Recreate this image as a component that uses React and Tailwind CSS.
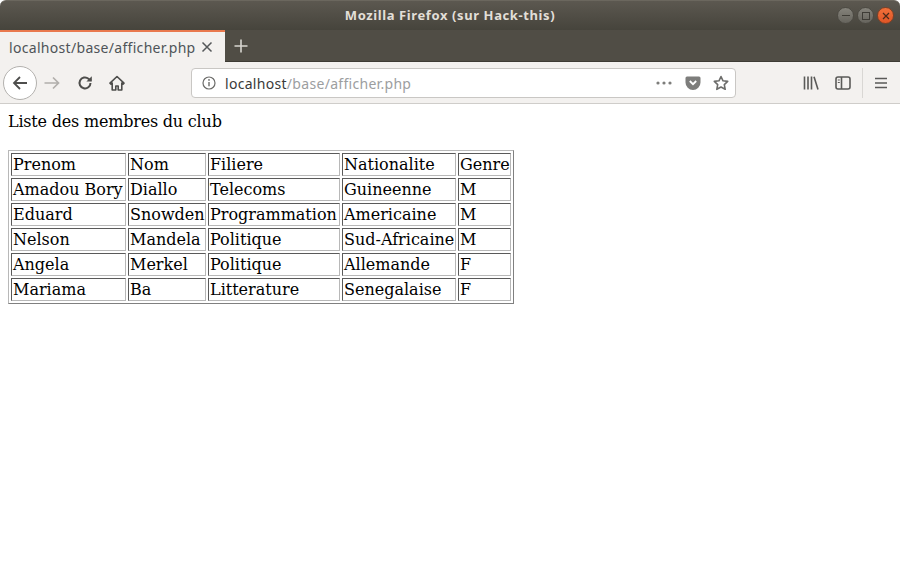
const rows = [
  ["Prenom", "Nom", "Filiere", "Nationalite", "Genre"],
  ["Amadou Bory", "Diallo", "Telecoms", "Guineenne", "M"],
  ["Eduard", "Snowden", "Programmation", "Americaine", "M"],
  ["Nelson", "Mandela", "Politique", "Sud-Africaine", "M"],
  ["Angela", "Merkel", "Politique", "Allemande", "F"],
  ["Mariama", "Ba", "Litterature", "Senegalaise", "F"],
];

const colW = ["w-[115px]", "w-[78px]", "w-[132px]", "w-[114px]", "w-[53px]"];

const ui = { fontFamily: '"Noto Sans", "Open Sans", sans-serif' };

function Icon({ children, w = 18, h = 18, vb = "0 0 18 18", cls = "" }) {
  return (
    <svg width={w} height={h} viewBox={vb} fill="none" className={cls}>
      {children}
    </svg>
  );
}

export default function App() {
  return (
    <div className="w-[900px] h-[575px] bg-white overflow-hidden flex flex-col">
      {/* title bar */}
      <div className="h-[30px] relative flex items-center justify-center bg-gradient-to-b from-[#5c5850] to-[#46443c] rounded-t-[6px] border-t border-[#6b675e]">
        <span className="text-[13px] font-bold text-[#e2dfd8] tracking-[0.6px]" style={ui}>Mozilla Firefox (sur Hack-this)</span>
        <div className="absolute right-[6px] top-[6px] flex gap-[3px]">
          <div className="w-[17px] h-[17px] rounded-full bg-gradient-to-b from-[#85837b] to-[#66645d] border border-[#4c4a43] flex items-center justify-center">
            <div className="w-[8px] h-px bg-[#3e3c36]" />
          </div>
          <div className="w-[17px] h-[17px] rounded-full bg-gradient-to-b from-[#85837b] to-[#66645d] border border-[#4c4a43] flex items-center justify-center">
            <div className="w-[8px] h-[8px] border border-[#3e3c36]" />
          </div>
          <div className="w-[17px] h-[17px] rounded-full bg-gradient-to-b from-[#f0703a] to-[#df5526] border border-[#7f4025] flex items-center justify-center">
            <Icon w={8} h={8} vb="0 0 8 8"><path d="M1 1l6 6M7 1L1 7" stroke="#4a2a1a" strokeWidth="1.2" /></Icon>
          </div>
        </div>
      </div>
      {/* tab strip */}
      <div className="h-[32px] flex bg-[#504d45] border-b border-[#3d3b34]">
        <div className="w-[225px] h-[32px] bg-[#f3f1ef] border-t-2 border-[#e9794e] flex items-center pl-[9px] shrink-0">
          <span className="text-[14px] tracking-[0.31px] text-[#4e5458] whitespace-nowrap w-[192px]" style={ui}>localhost/base/afficher.php</span>
          <Icon w={12} h={12} vb="0 0 12 12"><path d="M1.5 1.5l9 9M10.5 1.5l-9 9" stroke="#55585a" strokeWidth="1.5" /></Icon>
        </div>
        <div className="flex items-center pl-[8px]">
          <Icon w={16} h={16} vb="0 0 16 16"><path d="M8 1.5v13M1.5 8h13" stroke="#d8d6d0" strokeWidth="1.6" /></Icon>
        </div>
      </div>
      {/* nav bar */}
      <div className="h-[42px] flex items-center bg-[#f3f1ef] border-b border-[#cfcdca] relative">
        <div className="ml-[3px] w-[34px] h-[34px] rounded-full bg-white border border-[#b3b1ae] flex items-center justify-center">
          <Icon><path d="M16 9H3M9 3L3 9l6 6" stroke="#4e4e4c" strokeWidth="1.8" /></Icon>
        </div>
        <div className="ml-[6px] flex items-center">
          <Icon><path d="M1.5 9h14M10 3.5L15.5 9 10 14.5" stroke="#b1afac" strokeWidth="1.7" /></Icon>
        </div>
        <div className="ml-[16px] flex items-center">
          <Icon w={16} h={16} vb="0 0 16 16"><path d="M13.5 8A5.5 5.5 0 1 1 11.5 3.7L14 5.5" stroke="#4e4e4c" strokeWidth="2" /><path d="M14.8 1.2v5.4H9.4z" fill="#4e4e4c" /></Icon>
        </div>
        <div className="ml-[16px] flex items-center">
          <Icon w={16} h={16} vb="0 0 16 16"><path d="M8 1.5L1 8.2l1 1 1.2-1.1V15h3.6v-4h2.4v4h3.6V8.1L14 9.2l1-1z" fill="none" stroke="#4e4e4c" strokeWidth="1.6" strokeLinejoin="round" /></Icon>
        </div>
        <div className="ml-[66px] w-[545px] h-[30px] bg-white rounded-[4px] border border-[#c9c7c4] flex items-center shrink-0">
          <Icon w={14} h={14} vb="0 0 14 14" cls="ml-[10px]"><circle cx="7" cy="7" r="6" stroke="#6b6b69" strokeWidth="1.2" /><path d="M7 6v4.2" stroke="#6b6b69" strokeWidth="1.4" /><circle cx="7" cy="3.9" r="0.9" fill="#6b6b69" /></Icon>
          <span className="ml-[9px] mt-[2px] text-[14px] tracking-[0.3px] text-[#9c9e9f] whitespace-nowrap" style={ui}><span className="text-[#3a3a38]">localhost</span>/base/afficher.php</span>
          <div className="ml-auto flex items-center">
            <Icon w={16} h={4} vb="0 0 16 4"><circle cx="2" cy="2" r="1.6" fill="#7d7d7b" /><circle cx="8" cy="2" r="1.6" fill="#7d7d7b" /><circle cx="14" cy="2" r="1.6" fill="#7d7d7b" /></Icon>
            <Icon w={16} h={16} vb="0 0 16 16" cls="ml-[13px]"><path d="M2 1.5h12a1.5 1.5 0 0 1 1.5 1.5v4.5a7.5 7.5 0 0 1-15 0V3A1.5 1.5 0 0 1 2 1.5z" fill="#7d7d7b" /><path d="M4.8 6L8 9.2 11.2 6" stroke="#fff" strokeWidth="1.8" /></Icon>
            <Icon w={16} h={16} vb="0 0 16 16" cls="ml-[12px] mr-[6px]"><path d="M8 1.5l2 4.3 4.7.6-3.4 3.2.9 4.7L8 12l-4.2 2.3.9-4.7L1.3 6.4 6 5.8z" stroke="#6d6d6b" strokeWidth="1.6" strokeLinejoin="round" /></Icon>
          </div>
        </div>
        <div className="ml-[67px] flex items-center">
          <Icon w={16} h={16} vb="0 0 16 16"><path d="M1.5 1.5v13M5 1.5v13M8.5 1.5v13" stroke="#5a5a58" strokeWidth="1.6" /><path d="M11 1.8l4 12.8" stroke="#5a5a58" strokeWidth="1.6" /></Icon>
          <Icon w={16} h={16} vb="0 0 16 16" cls="ml-[16px]"><rect x="1" y="2" width="14" height="12" rx="2" stroke="#5a5a58" strokeWidth="1.6" /><path d="M6.5 2v12" stroke="#5a5a58" strokeWidth="1.6" /><path d="M2.8 5h2M2.8 7.5h2" stroke="#5a5a58" strokeWidth="1.2" /></Icon>
        </div>
        <div className="ml-[11px] w-px h-[30px] bg-[#d9d7d4]" />
        <div className="ml-[11px] flex items-center">
          <Icon w={14} h={14} vb="0 0 14 14"><path d="M1 2.5h12M1 7h12M1 11.5h12" stroke="#5a5a58" strokeWidth="1.6" /></Icon>
        </div>
      </div>
      {/* page */}
      <div className="px-2 pt-2 text-[16px] text-black" style={{ fontFamily: '"DejaVu Serif", serif' }}>
        <p className="leading-[19px] mb-[19px] tracking-[-0.2px]">Liste des membres du club</p>
        <table className="w-[506px] table-fixed border-separate border-spacing-[2px] border border-[#808080] border-t-[#b8b8b8] border-l-[#b8b8b8]">
          <tbody>
            {rows.map((r) => (
              <tr key={r[0]}>
                {r.map((c, i) => (
                  <td key={c} className={`${colW[i]} p-px leading-[19px] whitespace-nowrap border border-[#b8b8b8] border-t-[#5a5a5a] border-l-[#5a5a5a]`}>{c}</td>
                ))}
              </tr>
            ))}
          </tbody>
        </table>
      </div>
    </div>
  );
}
